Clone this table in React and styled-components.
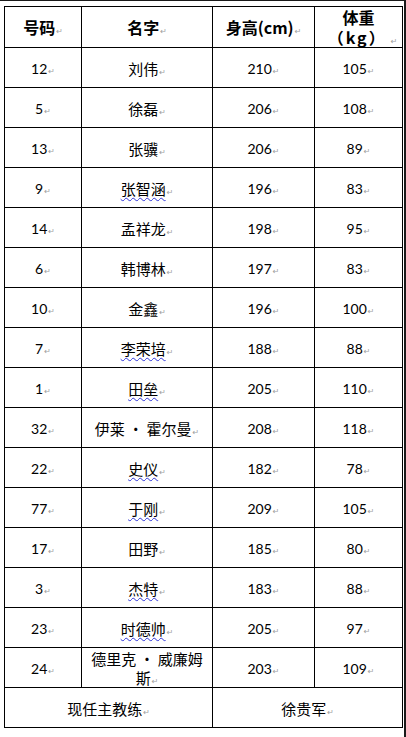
import React from 'react';
import styled, { createGlobalStyle } from 'styled-components';

const GlobalStyle = createGlobalStyle`
  html, body {
    margin: 0;
    padding: 0;
    background: #fff;
  }
  body {
    font-family: "Liberation Sans", "Noto Sans CJK SC", sans-serif;
  }
`;

const Page = styled.div`
  box-sizing: border-box;
  width: 406px;
  height: 737px;
  border-top: 1px solid #1a1a1a;
  border-right: 2px solid #1a1a1a;
  padding: 5px 0 0 4px;
  background: #fff;
`;

const Table = styled.table`
  border-collapse: collapse;
  table-layout: fixed;
  width: 398px;
`;

const Col = styled.col`
  width: ${(p) => p.$w}px;
`;

const Row = styled.tr`
  height: ${(p) => (p.$head ? 41 : 40)}px;
`;

const Cell = styled.td`
  border: 1px solid #000;
  padding: 1px 4px 0;
  text-align: center;
  vertical-align: middle;
  color: #000;
  font-family: ${(p) =>
    p.$num ? 'Lato, "Open Sans", sans-serif' : '"Noto Sans CJK SC", sans-serif'};
  font-size: ${(p) => (p.$num ? '14px' : '15px')};
  font-weight: 400;
  line-height: 19px;
`;

const HeadCell = styled(Cell).attrs({ as: 'th' })`
  padding: 0 2px;
  font-family: "Noto Sans CJK SC", sans-serif;
  font-weight: 700;
  font-size: 16px;
  line-height: 20px;
`;

const Unit = styled.span`
  display: inline-block;
  white-space: nowrap;
  padding-left: 8px;
  letter-spacing: 2px;
`;

const Mark = styled.span`
  color: #a0a0a0;
  font-family: "DejaVu Sans", sans-serif;
  font-size: 8px;
  font-weight: 400;
  line-height: 1;
  letter-spacing: 0;
  margin-left: ${(p) => (p.$gap ? 4 : 1)}px;
`;

const Squiggle = styled.span`
  text-decoration-line: underline;
  text-decoration-style: wavy;
  text-decoration-color: #2f35d8;
  text-decoration-thickness: 1px;
  text-underline-offset: 2px;
`;

const players = [
  ['12', '刘伟', '210', '105'],
  ['5', '徐磊', '206', '108'],
  ['13', '张骥', '206', '89'],
  ['9', '张智涵', '196', '83', true],
  ['14', '孟祥龙', '198', '95'],
  ['6', '韩博林', '197', '83'],
  ['10', '金鑫', '196', '100'],
  ['7', '李荣培', '188', '88', true],
  ['1', '田垒', '205', '110', true],
  ['32', '伊莱 · 霍尔曼', '208', '118'],
  ['22', '史仪', '182', '78', true],
  ['77', '于刚', '209', '105', true],
  ['17', '田野', '185', '80'],
  ['3', '杰特', '183', '88', true],
  ['23', '时德帅', '205', '97', true],
];

const M = ({ gap }) => <Mark $gap={gap}>↵</Mark>;

export default function App() {
  return (
    <>
      <GlobalStyle />
      <Page>
        <Table>
          <colgroup>
            <Col $w={77} />
            <Col $w={131} />
            <Col $w={102} />
            <Col $w={88} />
          </colgroup>
          <thead>
            <Row $head>
              <HeadCell>号码<M /></HeadCell>
              <HeadCell>名字<M /></HeadCell>
              <HeadCell>身高(cm)<M /></HeadCell>
              <HeadCell>
                体重
                <br />
                <Unit>
                  （kg）<M gap />
                </Unit>
              </HeadCell>
            </Row>
          </thead>
          <tbody>
            {players.map(([no, name, h, w, wavy]) => (
              <Row key={no}>
                <Cell $num>{no}<M /></Cell>
                <Cell>{wavy ? <Squiggle>{name}</Squiggle> : name}<M /></Cell>
                <Cell $num>{h}<M /></Cell>
                <Cell $num>{w}<M /></Cell>
              </Row>
            ))}
            <Row>
              <Cell $num>24<M /></Cell>
              <Cell>
                德里克 · 威廉姆
                <br />
                斯<M />
              </Cell>
              <Cell $num>203<M /></Cell>
              <Cell $num>109<M /></Cell>
            </Row>
            <Row>
              <Cell colSpan={2}>现任主教练<M /></Cell>
              <Cell colSpan={2}>徐贵军<M /></Cell>
            </Row>
          </tbody>
        </Table>
      </Page>
    </>
  );
}
